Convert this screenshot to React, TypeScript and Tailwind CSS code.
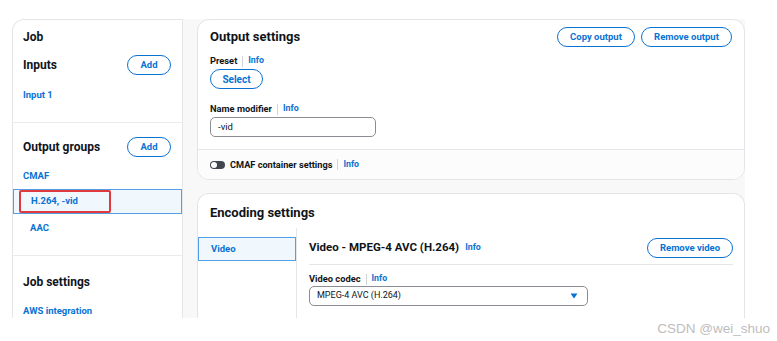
import React from "react";

const F = { fontFamily: "Roboto, 'Liberation Sans', Arial, sans-serif" };

function Info({ className = "" }: { className?: string }) {
  return (
    <span className={"flex items-center " + className}>
      <span className="mx-[5px] h-[11px] w-px bg-[#d1d5db]" />
      <span className="text-[8.8px] font-bold text-[#0972d3]">Info</span>
    </span>
  );
}

function PillButton({ children, className = "" }: { children: React.ReactNode; className?: string }) {
  return (
    <div
      className={
        "flex h-[20px] items-center justify-center rounded-full border-[1.5px] border-[#0972d3] bg-white text-[9.5px] font-bold text-[#0972d3] " +
        className
      }
    >
      {children}
    </div>
  );
}

export default function App() {
  return (
    <div className="relative h-[341px] w-[777px] overflow-hidden bg-white text-[#0f141a]" style={F}>
      <div className="flex h-[299px] pt-[19px] pl-[12px] overflow-hidden box-content" style={{ height: 299 }}>
        {/* left panel */}
        <div className="flex w-[171px] shrink-0 flex-col rounded-tl-[12px] border-l border-t border-r border-[#e4e6e9] bg-white h-[299px] overflow-hidden">
          <div className="border-b border-[#e9ebed] pb-[17px]">
            <div className="flex h-[34px] items-center pl-[10px] text-[12px] font-bold">Job</div>
            <div className="flex h-[22px] items-center justify-between pl-[10px] pr-[11px]">
              <span className="text-[12px] font-bold">Inputs</span>
              <PillButton className="w-[44px]">Add</PillButton>
            </div>
            <div className="mt-[9px] flex h-[20px] items-center pl-[10px] text-[9.5px] font-bold text-[#0972d3]">Input 1</div>
          </div>
          <div className="border-b border-[#e9ebed] pb-[17px]">
            <div className="mt-[14px] flex h-[20px] items-center justify-between pl-[10px] pr-[11px]">
              <span className="text-[12px] font-bold">Output groups</span>
              <PillButton className="w-[44px]">Add</PillButton>
            </div>
            <div className="mt-[9px] flex h-[20px] items-center pl-[10px] text-[9.5px] font-bold text-[#0972d3]">CMAF</div>
            <div className="mt-[3px] flex h-[25px] items-center border border-[#539fe5] bg-[#f0f7fd] pl-[5px]">
              <div className="flex h-[23px] w-[92px] items-center rounded-[2px] border-2 border-[#e0393e] pl-[10px] text-[9.5px] font-bold text-[#0972d3]">
                H.264, -vid
              </div>
            </div>
            <div className="mt-[4px] flex h-[20px] items-center pl-[17px] text-[9.5px] font-bold text-[#0972d3]">AAC</div>
          </div>
          <div>
            <div className="mt-[15px] flex h-[21px] items-center pl-[10px] text-[12px] font-bold">Job settings</div>
            <div className="mt-[10px] flex h-[18px] items-center pl-[10px] text-[9.5px] font-bold text-[#0972d3]">AWS integration</div>
          </div>
        </div>

        {/* main */}
        <div className="flex h-[299px] w-[562px] shrink-0 flex-col gap-[13px] overflow-hidden bg-[#f8f8f8] pl-[14px]">
          {/* output settings */}
          <div className="shrink-0 overflow-hidden rounded-[12px] border border-[#e2e4e7] bg-white">
            <div className="px-[12px] pb-[12px]">
              <div className="flex h-[34px] items-center justify-between">
                <span className="text-[13px] font-bold">Output settings</span>
                <div className="flex gap-[6px]">
                  <PillButton className="w-[78px]">Copy output</PillButton>
                  <PillButton className="w-[91px]">Remove output</PillButton>
                </div>
              </div>
              <div className="flex h-[14px] items-center">
                <span className="text-[9.3px] font-bold">Preset</span>
                <Info />
              </div>
              <PillButton className="mt-[1px] w-[53px] text-[10px]">Select</PillButton>
              <div className="mt-[13px] flex h-[14px] items-center">
                <span className="text-[9.3px] font-bold">Name modifier</span>
                <Info />
              </div>
              <div className="mt-[1px] flex h-[20px] w-[166px] items-center rounded-[5px] border border-[#8c8c94] pl-[7px] text-[9.5px]">
                -vid
              </div>
            </div>
            <div className="flex h-[30px] items-center border-t border-[#e4e6e9] bg-[#fcfcfc] px-[12px]">
              <div className="relative h-[8px] w-[15px] rounded-full bg-[#424650]">
                <div className="absolute left-[1px] top-[1px] h-[6px] w-[6px] rounded-full bg-white" />
              </div>
              <span className="ml-[5px] text-[9.2px] font-bold">CMAF container settings</span>
              <Info />
            </div>
          </div>

          {/* encoding settings */}
          <div className="flex-1 shrink-0 overflow-hidden rounded-t-[12px] border border-b-0 border-[#e2e4e7] bg-white">
            <div className="flex h-[34px] items-center pl-[12px] pt-[3px] text-[13px] font-bold">Encoding settings</div>
            <div className="flex h-full">
              <div className="w-[99px] shrink-0 border-r border-[#e4e6e9]">
                <div className="mt-[9px] flex h-[24px] items-center border border-[#539fe5] bg-[#f0f7fd] pl-[12px] text-[9.5px] font-bold text-[#0972d3]">
                  Video
                </div>
              </div>
              <div className="flex-1 pl-[12px] pr-[11px]">
                <div className="mt-[10px] flex h-[20px] items-center justify-between">
                  <div className="flex items-center">
                    <span className="text-[11.5px] font-bold">Video - MPEG-4 AVC (H.264)</span>
                    <span className="ml-[6px] text-[8.8px] font-bold text-[#0972d3]">Info</span>
                  </div>
                  <PillButton className="w-[86px]">Remove video</PillButton>
                </div>
                <div className="mt-[6px] border-t border-[#e4e6e9]" />
                <div className="mt-[7px] flex h-[14px] items-center">
                  <span className="text-[9.3px] font-bold">Video codec</span>
                  <Info />
                </div>
                <div className="flex h-[20px] w-[279px] items-center justify-between rounded-[5px] border border-[#8c8c94] pl-[7px] pr-[9px] text-[9px]">
                  <span>MPEG-4 AVC (H.264)</span>
                  <svg width="8" height="6" viewBox="0 0 8 6">
                    <path d="M0.5 0.5 H7.5 L4 5.5 Z" fill="#0972d3" />
                  </svg>
                </div>
              </div>
            </div>
          </div>
        </div>
      </div>
      <div className="flex h-[23px] items-center justify-end pr-[7px] text-[13.5px] text-[#bdbdbd]" style={{ fontFamily: "'Liberation Sans', Arial, sans-serif" }}>
        CSDN @wei_shuo
      </div>
    </div>
  );
}
